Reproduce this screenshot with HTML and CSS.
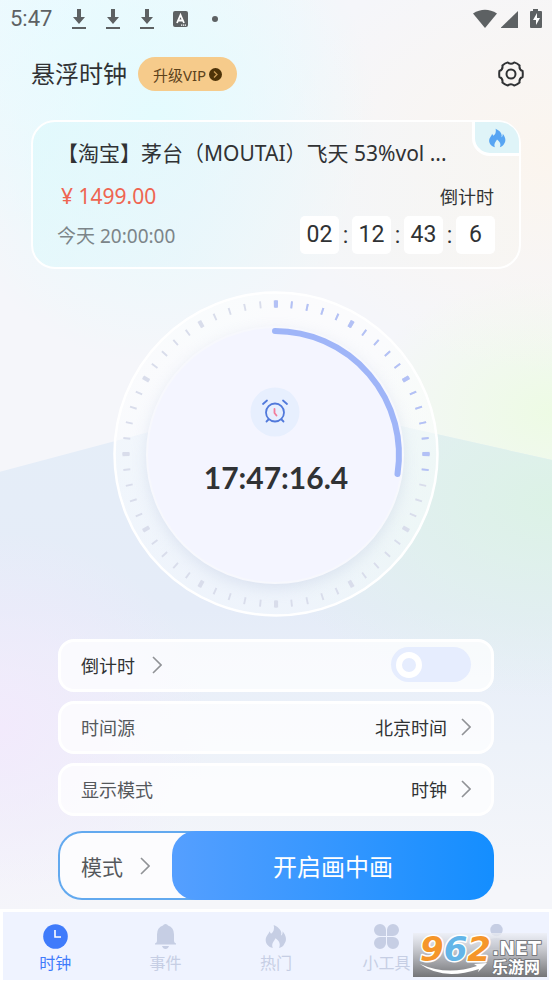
FILE: index.html
```html
<!DOCTYPE html>
<html lang="zh-CN">
<head>
<meta charset="utf-8">
<meta name="viewport" content="width=device-width, initial-scale=1">
<title>悬浮时钟</title>
<link rel="stylesheet" href="styles.css">
</head>
<body>
<svg width="0" height="0" class="defs" aria-hidden="true">
  <symbol id="download" viewBox="0 0 16 22"><path d="M6 1h4v8h4l-6 7-6-7h4z" fill="currentColor"/><path d="M1 20h14" stroke="currentColor" stroke-width="2"/></symbol>
  <symbol id="chevron" viewBox="0 0 10 18"><path d="M1 1l8 8-8 8" fill="none" stroke="#909296" stroke-width="1.6"/></symbol>
  <symbol id="flame" viewBox="0 0 24 28"><path d="M10 1c7 3 10 8 8 12 2-1 2-3 2-5 4 5 5 10 2 14-1 3-4 4-6 5 2-5 0-8-4-11-2 4-5 6-3 11-5-1-8-5-8-9 0-5 4-7 4-10l2 3c3-2 4-6 3-10z" fill="currentColor"/></symbol>
</svg>
<div class="app">
  <header class="status">
    <span class="status-time">5:47</span>
    <svg class="dl"><use href="#download"/></svg>
    <svg class="dl"><use href="#download"/></svg>
    <svg class="dl"><use href="#download"/></svg>
    <svg class="badge-a" viewBox="0 0 15 16"><rect width="15" height="16" rx="2" fill="currentColor"/><path d="M4 12L7.500 4 11 12M5.500 9.500h4" fill="none" stroke="#fff" stroke-width="1.800"/><path d="M8 14.200h5" stroke="#fff" stroke-width="1.300" stroke-dasharray="1.200 .7"/></svg>
    <span class="dot"></span>
    <svg class="signals" viewBox="0 0 69 20"><path d="M0 4.500Q12 -3 24 4.500L12 19z" fill="currentColor"/><path d="M28 18.500L45 2v17H28z" fill="currentColor"/><path d="M60 0h5v2h3q1 0 1 1v15q0 1-1 1H58q-1 0-1-1V3q0-1 1-1h2z" fill="currentColor"/><path d="M64 4l-4 7h3v5l4-7h-3z" fill="#fff"/></svg>
  </header>

  <div class="topbar">
    <h1>悬浮时钟</h1>
    <button class="vip">升级VIP<svg viewBox="0 0 13 13"><circle cx="6.500" cy="6.500" r="6.500" fill="#4d3208"/><path d="M5 3.500l3 3-3 3" fill="none" stroke="#c99a55" stroke-width="1.300"/></svg></button>
    <button class="settings" aria-label="设置"><svg viewBox="-13 -13 26 26"><path d="M11.600 -3Q12 0 11.600 3Q7.800 4.500 8.600 8.500Q6 10.800 3.200 11.600Q0 8.800-3.200 11.600Q-6 10.800-8.600 8.500Q-7.800 4.500-11.600 3Q-12 0-11.600-3Q-7.800-4.500-8.600-8.500Q-6-10.800-3.200-11.600Q0-8.800 3.200-11.600Q6-10.800 8.600-8.500Q7.800-4.500 11.600-3z" fill="none" stroke="#303234" stroke-width="2" stroke-linejoin="round"/><circle r="4.500" fill="none" stroke="#303234" stroke-width="2"/></svg></button>
  </div>

  <section class="deal">
    <span class="hot"><svg><use href="#flame"/></svg></span>
    <h2>【淘宝】茅台（MOUTAI）飞天 53%vol ...</h2>
    <div class="deal-line">
      <span class="price">¥ 1499.00</span>
      <span class="count-label">倒计时</span>
    </div>
    <div class="deal-line">
      <span class="date">今天 20:00:00</span>
      <span class="count"><b>02</b><i>:</i><b>12</b><i>:</i><b>43</b><i>:</i><b>6</b></span>
    </div>
  </section>

  <section class="dial">
    <svg class="face" viewBox="-163 -163 326 326" aria-hidden="true">
      <defs>
        <filter id="soft" x="-20%" y="-20%" width="140%" height="140%"><feGaussianBlur stdDeviation="8"/></filter>
        <linearGradient id="ring" x1="0" y1="0" x2="0" y2="1"><stop offset="0" stop-color="#fff" stop-opacity=".6"/><stop offset="1" stop-color="#f8fcff" stop-opacity=".5"/></linearGradient>
      </defs>
      <circle r="161.500" fill="url(#ring)" stroke="#fff" stroke-width="2.500"/>
      <circle cx="-1" cy="6" r="128" fill="#b9c5de" opacity=".4" filter="url(#soft)"/>
      <g fill="none" stroke="#d9ddeb" stroke-width="7">
        <circle r="150" pathLength="600" stroke-dasharray="0 4.400 1.200 4.400" transform="rotate(-93)"/>
        <circle r="150" pathLength="600" stroke-dasharray="0 3.700 2.600 43.700" transform="rotate(-93)"/>
      </g>
      <g fill="none" stroke="#b3c1f6" stroke-width="7">
        <path d="M-7.850-149.790A150 150 0 0 1 148.150 23.470" pathLength="170" stroke-dasharray="0 4.400 1.200 4.400"/>
        <path d="M-7.850-149.790A150 150 0 0 1 148.150 23.470" pathLength="170" stroke-dasharray="0 3.700 2.600 43.700"/>
      </g>
      <circle cx="-1" cy="1" r="128" fill="#f4f5ff" stroke="#f7f8fd" stroke-width="2"/>
      <path d="M-1-123A124 124 0 0 1 121.500 20" fill="none" stroke="#9fb5f8" stroke-width="6" stroke-linecap="round"/>
      <circle cx="-1" cy="-42" r="24.500" fill="#e7effe"/>
      <g fill="none" stroke="#5179db" stroke-width="1.800" stroke-linecap="round">
        <circle cx="-1" cy="-41.500" r="9"/>
        <path d="M-13-50l4-3.500M11-50l-4-3.500M-7.500-34.500l-2 2M5.500-34.500l2 2"/>
        <path d="M-1.500-45v4l2 2.500" stroke="#f37d9b"/>
      </g>
    </svg>
    <time>17:47:16.4</time>
  </section>

  <main class="options">
    <div class="row">
      <label class="strong" for="countdown">倒计时</label><svg class="chev"><use href="#chevron"/></svg>
      <input class="switch" id="countdown" type="checkbox" role="switch">
    </div>
    <button class="row"><span>时间源</span><span class="value">北京时间</span><svg class="chev"><use href="#chevron"/></svg></button>
    <button class="row"><span>显示模式</span><span class="value">时钟</span><svg class="chev"><use href="#chevron"/></svg></button>
    <div class="actions">
      <button class="mode">模式<svg class="chev"><use href="#chevron"/></svg></button>
      <button class="start">开启画中画</button>
    </div>
  </main>

  <nav class="tabs">
    <a class="active" href="#clock"><svg viewBox="0 0 25 25"><circle cx="12.500" cy="12.500" r="12.300" fill="currentColor"/><path d="M12 6v7h6" fill="none" stroke="#fff" stroke-width="1.600"/></svg>时钟</a>
    <a href="#events"><svg viewBox="0 0 25 25"><path d="M12.500 0q2 0 2.500 1.500 6 2 6 9V17q0 1.500 2 2.500v1h-21v-1q2-1 2-2.500v-6.500q0-7 6-9Q10.500 0 12.500 0zM9 22h7q-1 3-3.500 3T9 22z" fill="currentColor"/></svg>事件</a>
    <a href="#hot"><svg><use href="#flame"/></svg>热门</a>
    <a href="#tools"><svg viewBox="0 0 25 25" fill="currentColor"><path d="M6 0a6 6 0 0 1 6 6v6H6A6 6 0 0 1 6 0zM19 0a6 6 0 0 1 0 12h-6V6a6 6 0 0 1 6-6zM6 13h6v6a6 6 0 1 1-6-6zM13 13h6a6 6 0 1 1-6 6z"/></svg>小工具</a>
    <a href="#me" aria-label="我的"><svg viewBox="0 0 25 25" fill="currentColor"><circle cx="12.500" cy="6" r="6.200"/><path d="M1 25q0-11 11.500-11T24 25z"/></svg></a>
    <svg class="watermark" viewBox="0 0 134 44" role="img" aria-label="962.NET 乐游网">
      <defs>
        <linearGradient id="wm" x1="0" y1="0" x2="0" y2="1"><stop offset="0" stop-color="#eceef4" stop-opacity=".75"/><stop offset=".5" stop-color="#b2b3b8" stop-opacity=".92"/><stop offset="1" stop-color="#747578"/></linearGradient>
      </defs>
      <rect width="134" height="44" fill="url(#wm)"/>
      <path d="M7 31Q30 48 66 36l-1 3 9-9-13 1 3 2Q34 43 7 31z" fill="#fff"/>
      <text class="wm-num" x="7" y="28"><tspan fill="#f5962a">9</tspan><tspan fill="#63b5e8">6</tspan><tspan fill="#f5962a">2</tspan></text>
      <text class="wm-net" x="79" y="22">.NET</text>
      <text class="wm-cn" x="79" y="40">乐游网</text>
    </svg>
  </nav>
</div>
</body>
</html>
```
FILE: styles.css
```css
* { box-sizing: border-box; }
body {
  margin: 0;
  font-family: "Noto Sans", "Noto Sans CJK SC", sans-serif;
  color: #303234;
}
button { font: inherit; color: inherit; border: 0; background: none; padding: 0; cursor: pointer; }
a { text-decoration: none; }
svg { display: block; }
.defs { position: absolute; }

.app {
  position: relative;
  z-index: 0;
  min-height: 100vh;
  display: flex;
  flex-direction: column;
  background:
    radial-gradient(ellipse 40% 25% at 28% 12%, #e4fbfe 0%, #e4fbfe00 100%),
    radial-gradient(ellipse 50% 22% at 10% 2%, #ecfaff 0%, #ecfaff00 100%),
    radial-gradient(ellipse 50% 22% at 100% 16%, #fbf5ee 0%, #fbf5ee00 100%),
    radial-gradient(ellipse 35% 14% at 100% 42%, #edfbe4 0%, #edfbe400 100%),
    #f5f6fa;
}
.app::before {
  content: "";
  position: absolute;
  inset: 0;
  z-index: -1;
  clip-path: polygon(0 48%, 50% 40.5%, 100% 46.8%, 100% 100%, 0 100%);
  background:
    radial-gradient(ellipse 38% 20% at 0 74%, #f2eafc 0%, #f2eafc00 100%),
    radial-gradient(ellipse 55% 20% at 100% 51%, #dcf2e6 0%, #dcf2e600 100%),
    linear-gradient(#e5eef8 40%, #e5ecf8 62%, #edf2f9 76%, #f5f6fa 90%);
}

.status {
  height: 37px;
  padding: 0 10px;
  display: flex;
  align-items: center;
  gap: 18px;
  color: #5d6163;
  font: 22px Roboto, sans-serif;
}
.dl { width: 16px; height: 22px; }
.badge-a { width: 15px; height: 16px; }
.status-time { margin-right: 1px; }
.dot { width: 6px; height: 6px; margin-left: 6px; border-radius: 50%; background: currentColor; }
.signals { width: 69px; height: 20px; margin-left: auto; }

.topbar { display: flex; align-items: center; height: 74px; padding: 0 28px 0 31px; }
h1 { margin: 0; font-size: 24px; line-height: 32px; font-weight: 400; }
.vip {
  display: flex;
  align-items: center;
  gap: 3px;
  height: 34px;
  margin-left: 11px;
  padding: 0 15px;
  border-radius: 17px;
  background: #f6cb8b;
  color: #5c421b;
  font-size: 15px;
}
.vip svg { width: 13px; height: 13px; }
.settings { margin-left: auto; }
.settings svg { width: 26px; height: 26px; }

.deal {
  position: relative;
  height: 149px;
  margin: 9px 31px 0;
  padding: 17px 24px 0;
  border: 2px solid #fff;
  border-radius: 24px;
  background: linear-gradient(105deg, #def9fcb0 0%, #e7f6fbb0 35%, #f4f6f7b0 65%, #f8f6f2b0 100%);
}
.hot {
  position: absolute;
  top: 0;
  right: 0;
  display: grid;
  place-items: center;
  width: 47px;
  height: 34px;
  border: solid #fff;
  border-width: 0 0 3px 3px;
  border-radius: 0 20px 0 18px;
  background: #dff4f8;
  color: #57a5f3;
}
.hot svg { width: 18px; height: 20px; }
h2 { margin: 0; font-size: 21px; line-height: 28px; font-weight: 400; white-space: nowrap; }
.deal-line { display: flex; align-items: center; justify-content: space-between; height: 38px; }
h2 + .deal-line { margin: 10px 0 1px; }
.price { margin-left: 4px; font-size: 21px; color: #ef6551; }
.count-label { padding-right: 1px; font-size: 18px; }
.date { font-size: 19px; color: #7c8589; }
.count { display: flex; align-items: center; font: 23px Roboto, sans-serif; }
.count b {
  width: 39px;
  line-height: 38px;
  border-radius: 5px;
  background: #fff;
  font-weight: 400;
  text-align: center;
}
.count i { width: 13px; font-style: normal; text-align: center; }

.dial {
  display: grid;
  justify-items: center;
  margin-top: 22px;
}
.face, .dial time { grid-area: 1 / 1; }
.face { width: 326px; height: 326px; overflow: visible; }
.dial time {
  align-self: center;
  margin-top: 46px;
  font: 700 30px/36px Lato, sans-serif;
}

.options {
  display: flex;
  flex-direction: column;
  gap: 9px;
  padding: 22px 58px 9px;
}
.row {
  display: flex;
  align-items: center;
  width: 100%;
  height: 53px;
  padding: 0 20px 2px;
  border: 3px solid #fff;
  border-radius: 16px;
  background: #ffffffb8;
  color: #55585c;
  font-size: 18px;
  text-align: left;
}
.strong, .value { color: #303234; }
.value { margin-left: auto; }
.chev { width: 10px; height: 18px; flex: none; }
.value + .chev { margin-left: 14px; }
.strong + .chev { margin-left: 17px; }
.switch {
  appearance: none;
  display: flex;
  align-items: center;
  width: 80px;
  height: 35px;
  margin: 0 0 0 auto;
  padding: 0 5px;
  border-radius: 18px;
  background: #e6edfe;
}
.switch::before {
  content: "";
  box-sizing: border-box;
  width: 26px;
  height: 26px;
  border: 6px solid #fff;
  border-radius: 50%;
}
.switch:checked { justify-content: flex-end; background: #9fb5f8; }

.actions { display: flex; height: 69px; margin-top: 6px; }
.mode {
  display: flex;
  align-items: center;
  gap: 17px;
  flex: none;
  width: 144px;
  margin-right: -30px;
  padding-left: 21px;
  border: 2px solid #62a9ef;
  border-right: 0;
  border-radius: 24px 0 0 24px;
  background: #fcfcfe;
  color: #55585c;
  font-size: 21px;
}
.start {
  flex: 1;
  z-index: 1;
  border-radius: 24px;
  background: linear-gradient(90deg, #559fff, #148eff);
  color: #fff;
  font-size: 24px;
}

.tabs {
  position: relative;
  display: grid;
  grid-template-columns: repeat(5, 1fr);
  height: 74px;
  margin-top: auto;
  box-shadow: inset 0 0 0 3px #fff;
  background: #eff3ff;
}
.tabs a {
  display: flex;
  flex-direction: column;
  align-items: center;
  padding-top: 15px;
  color: #c6cee4;
  font-size: 16px;
  line-height: 28px;
}
.tabs a svg { width: 25px; height: 25px; flex: none; }
.tabs .active { color: #3f7bfb; }
.watermark { position: absolute; right: 5px; bottom: 6px; width: 134px; height: 44px; overflow: visible; }
.watermark text { paint-order: stroke; stroke-linejoin: round; }
.wm-num { font: italic 700 34px "DejaVu Sans", sans-serif; stroke: #fff; stroke-width: 3px; }
.wm-net { font: 700 19px "DejaVu Sans", sans-serif; fill: #fff; stroke: #77797e; stroke-width: 2px; }
.wm-cn { font: 700 16px "Noto Sans CJK SC", sans-serif; fill: #fff; stroke: #77797e; stroke-width: 2px; }
```
